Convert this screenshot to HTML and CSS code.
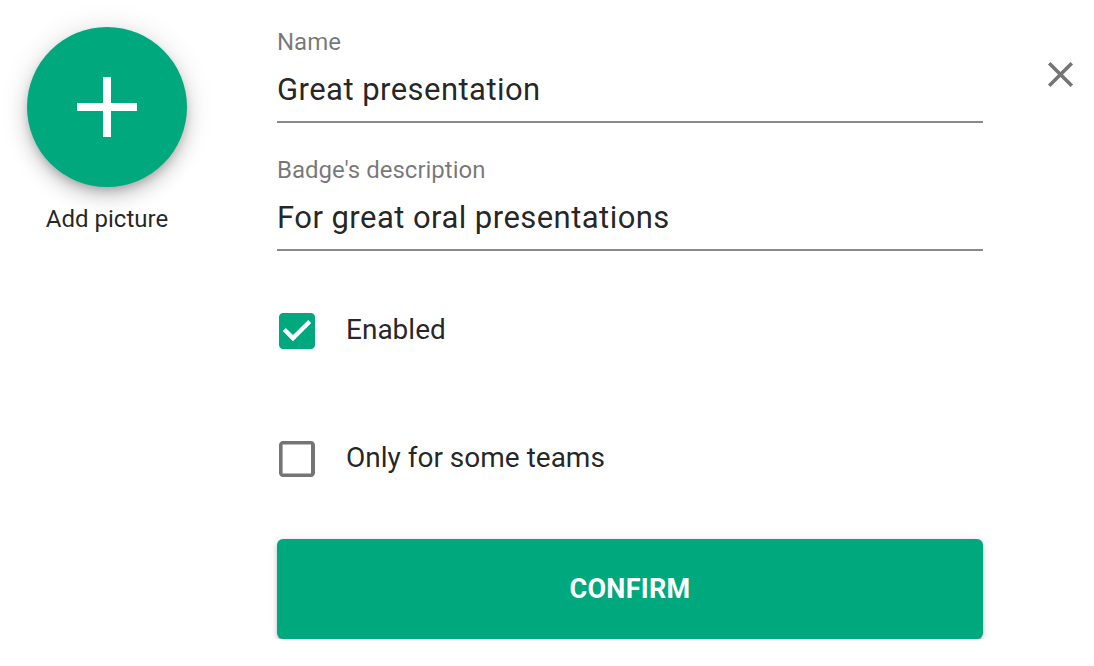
FILE: index.html
```html
<!DOCTYPE html>
<html>
<head>
<meta charset="utf-8">
<link rel="stylesheet" href="styles.css">
</head>
<body>
<div class="dialog">
  <div class="picture-col">
    <button class="fab" type="button" aria-label="Add picture">
      <svg width="60" height="60" viewBox="0 0 60 60"><rect x="26" y="0" width="8" height="60" fill="#fff"/><rect x="0" y="26" width="60" height="8" fill="#fff"/></svg>
    </button>
    <div class="fab-label">Add picture</div>
  </div>
  <div class="form">
    <div class="field">
      <div class="label">Name</div>
      <div class="input">Great presentation</div>
    </div>
    <div class="field second">
      <div class="label">Badge's description</div>
      <div class="input">For great oral presentations</div>
    </div>
    <div class="check-row first-check">
      <svg class="box" width="36" height="36" viewBox="3 3 18 18"><path fill="#00a87d" d="M19 3H5c-1.11 0-2 .9-2 2v14c0 1.1.89 2 2 2h14c1.11 0 2-.9 2-2V5c0-1.1-.89-2-2-2zm-9 14l-5-5 1.41-1.41L10 14.17l7.59-7.59L19 8l-9 9z"/><path fill="#fff" d="M10 17l-5-5 1.41-1.41L10 14.17l7.590-7.59L19 8l-9 9z"/></svg>
      <span class="check-text">Enabled</span>
    </div>
    <div class="check-row second-check">
      <svg class="box" width="36" height="36" viewBox="3 3 18 18"><path fill="#757575" d="M19 4.8v14.4H4.8V4.8h14.4m0-1.8H5c-1.1 0-2 .9-2 2v14c0 1.1.9 2 2 2h14c1.1 0 2-.9 2-2V5c0-1.1-.9-2-2-2z"/></svg>
      <span class="check-text">Only for some teams</span>
    </div>
    <button class="confirm" type="button">CONFIRM</button>
  </div>
  <button class="close" type="button" aria-label="Close">
    <svg width="43" height="43" viewBox="0 0 24 24"><path fill="#757575" d="M19 6.41L17.59 5 12 10.59 6.41 5 5 6.41 10.59 12 5 17.590 6.41 19 12 13.41 17.59 19 19 17.59 13.41 12z"/></svg>
  </button>
</div>
</body>
</html>
```
FILE: styles.css
```css
html, body {
  margin: 0;
  padding: 0;
  background: #fff;
}
body {
  font-family: Roboto, "Liberation Sans", sans-serif;
  color: rgba(0, 0, 0, 0.87);
}
.dialog {
  display: flex;
  align-items: flex-start;
  padding: 27px 0 0 27px;
}
.picture-col {
  width: 160px;
  display: flex;
  flex-direction: column;
  align-items: center;
}
.fab {
  width: 160px;
  height: 160px;
  border-radius: 50%;
  border: none;
  padding: 0;
  background: #00a87d;
  display: flex;
  align-items: center;
  justify-content: center;
  box-shadow: 0 5px 9px -2px rgba(0,0,0,.2), 0 10px 18px 0 rgba(0,0,0,.14), 0 2px 30px 0 rgba(0,0,0,.12);
}
.fab-label {
  margin-top: 18px;
  font-size: 24px;
  line-height: 28px;
  color: rgba(0, 0, 0, 0.87);
  white-space: nowrap;
}
.form {
  margin-left: 90px;
  width: 706px;
  padding-top: 1px;
  display: flex;
  flex-direction: column;
}
.field {
  border-bottom: 2px solid #8a8a8a;
}
.field.second {
  margin-top: 33px;
}
.label {
  font-size: 24px;
  line-height: 28px;
  color: rgba(0, 0, 0, 0.54);
}
.input {
  margin-top: 16px;
  font-size: 31px;
  letter-spacing: 0.45px;
  line-height: 36px;
  padding-bottom: 13px;
  color: rgba(0, 0, 0, 0.87);
}
.check-row {
  display: flex;
  align-items: center;
  height: 36px;
  margin-left: 2px;
}
.first-check {
  margin-top: 62px;
}
.second-check {
  margin-top: 92px;
}
.box {
  flex: none;
  display: block;
}
.check-text {
  margin-left: 31px;
  font-size: 28px;
  line-height: 34px;
  margin-bottom: 2px;
  color: rgba(0, 0, 0, 0.87);
}
.confirm {
  margin-top: 62px;
  height: 100px;
  width: 706px;
  border: none;
  border-radius: 6px;
  background: #00a87d;
  color: #fff;
  font-family: Roboto, "Liberation Sans", sans-serif;
  font-weight: 700;
  font-size: 27px;
  letter-spacing: 0.3px;
  box-shadow: 0 4px 2px -2px rgba(0,0,0,.2), 0 3px 4px 0 rgba(0,0,0,.14), 0 1px 9px 0 rgba(0,0,0,.12);
}
.close {
  margin-left: 56px;
  margin-top: 26px;
  width: 43px;
  height: 43px;
  padding: 0;
  border: none;
  background: none;
  display: block;
}
.close svg {
  display: block;
}
```
